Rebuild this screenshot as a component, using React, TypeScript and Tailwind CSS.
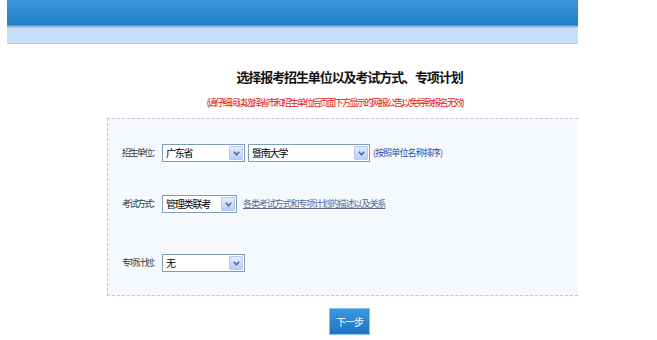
import React from "react"

const cjk = "font-['Noto_Sans_CJK_SC','Noto_Sans',sans-serif]"

function FakeSelect({ width, value }: { width: string; value: string }) {
  return (
    <div className={`flex h-[18px] shrink-0 items-stretch border border-[#7f9db9] bg-white ${width}`}>
      <span className="flex-1 truncate whitespace-nowrap pl-[3px] text-[10px] leading-[16px] tracking-[-1.2px] text-black">
        {value}
      </span>
      <span className="m-[1px] flex w-[14px] items-center justify-center rounded-[1px] border border-[#b4c8f0] bg-gradient-to-b from-[#e3ecfd] to-[#b9cdf6]">
        <svg width="7" height="5" viewBox="0 0 7 5">
          <path d="M0.8 0.8 L3.5 3.8 L6.2 0.8" fill="none" stroke="#4d6aa0" strokeWidth="1.6" />
        </svg>
      </span>
    </div>
  )
}

function Label({ children }: { children: React.ReactNode }) {
  return (
    <span className="w-[37px] shrink-0 whitespace-nowrap text-[9px] tracking-[-1.6px] text-[#333]">
      {children}
    </span>
  )
}

export default function App() {
  return (
    <div className={`h-[340px] w-[657px] bg-white ${cjk}`}>
      {/* header bar */}
      <div className="ml-[7px] w-[571px]">
        <div className="h-[25px] bg-gradient-to-b from-[#3e95dc] to-[#1a7fc8]" />
        <div className="h-[1px] bg-[#5a90c2]" />
        <div className="h-[2px] bg-[#a7b9d6]" />
        <div className="h-[15px] bg-[#c5dff6]" />
        <div className="h-[1px] bg-[#b3cfe9]" />
      </div>

      {/* title */}
      <div className="ml-[107px] mt-[25px] flex w-[485px] justify-center">
        <h1 className="text-[13px] font-bold leading-[16px] tracking-[-1.1px] text-[#111]">
          选择报考招生单位以及考试方式、专项计划
        </h1>
      </div>
      <div className="ml-[107px] mt-[11px] flex w-[455px] justify-center">
        <p className="whitespace-nowrap text-[9.5px] leading-[12px] tracking-[-2.05px] text-[#e0201c]">
          (请仔细阅读选择省市和招生单位后页面下方显示的网报公告,以免导致报名无效)
        </p>
      </div>

      {/* form panel */}
      <div className="ml-[107px] mt-[10px] h-[178px] w-[471px] border-b border-l border-t border-dashed border-[#c4c8cc] bg-[#f5f9fd] pl-[14px] pt-[25px]">
        <div className="flex items-center gap-[3px]">
          <Label>招生单位：</Label>
          <FakeSelect width="w-[83px]" value="广东省" />
          <FakeSelect width="w-[122px]" value="暨南大学" />
          <span className="whitespace-nowrap text-[9px] tracking-[-0.9px] text-[#1d4ea6]">(按照单位名称排序)</span>
        </div>
        <div className="mt-[33px] flex items-center gap-[3px]">
          <Label>考试方式：</Label>
          <FakeSelect width="w-[75px]" value="管理类联考" />
          <a className="ml-[3px] whitespace-nowrap text-[9px] tracking-[-1.1px] text-[#5a6590] underline">
            各类考试方式和专项计划的描述以及关系
          </a>
        </div>
        <div className="mt-[41px] flex items-center gap-[3px]">
          <Label>专项计划：</Label>
          <FakeSelect width="w-[83px]" value="无" />
        </div>
      </div>

      {/* next button */}
      <div className="ml-[107px] mt-[12px] flex w-[485px] justify-center">
        <button className="h-[27px] w-[41px] border border-[#8cc1ee] bg-gradient-to-b from-[#3d97e0] to-[#1c74c4] text-[10px] tracking-[-1px] text-white">
          下一步
        </button>
      </div>
    </div>
  )
}
